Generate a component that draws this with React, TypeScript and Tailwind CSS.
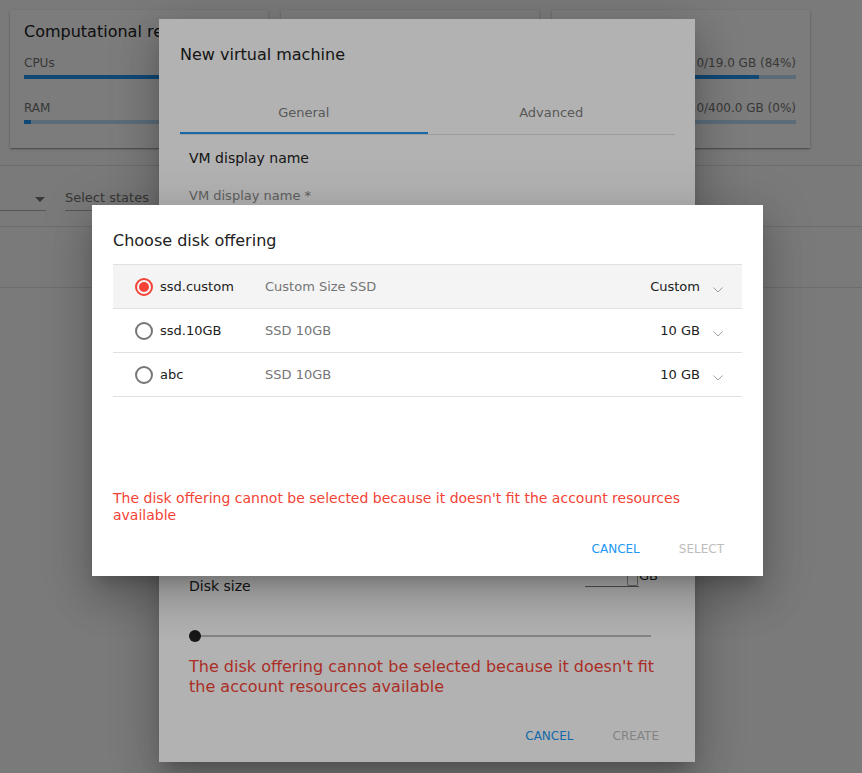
import React from "react";

const font = "font-['DejaVu_Sans',sans-serif]";

const dialogShadow =
  "shadow-[0_11px_15px_-7px_rgba(0,0,0,0.2),0_24px_38px_3px_rgba(0,0,0,0.14),0_9px_46px_8px_rgba(0,0,0,0.12)]";

type Usage = { label: string; value: string; percent: number };

const ResourceCard: React.FC<{ title: string; rows: Usage[] }> = ({ title, rows }) => (
  <div className="h-[138px] bg-white px-[14px] pt-[12px] shadow-[0_1px_3px_rgba(0,0,0,0.2),0_1px_1px_rgba(0,0,0,0.14),0_2px_1px_-1px_rgba(0,0,0,0.12)]">
    <div className="text-[16px] leading-[19px] text-[#212121] whitespace-nowrap">{title}</div>
    {rows.map((row, i) => (
      <div key={row.label} className={i === 0 ? "mt-[15px]" : "mt-[22px]"}>
        <div className="flex justify-between text-[12px] leading-[14px] text-[#757575] whitespace-nowrap">
          <span>{row.label}</span>
          <span>{row.value}</span>
        </div>
        <div className="mt-[5px] h-[4px] bg-[#bbdefb]">
          <div className="h-full bg-[#2196f3]" style={{ width: `${row.percent}%` }} />
        </div>
      </div>
    ))}
  </div>
);

const Chevron = () => (
  <svg width="10" height="6" viewBox="0 0 10 6" className="mt-[10px]">
    <polyline points="0.5,0.5 5,5 9.5,0.5" fill="none" stroke="#9e9e9e" strokeWidth="1" />
  </svg>
);

const Radio: React.FC<{ checked?: boolean }> = ({ checked }) =>
  checked ? (
    <div className="flex h-[18px] w-[18px] items-center justify-center rounded-full border-2 border-[#f44336]">
      <div className="h-[10px] w-[10px] rounded-full bg-[#f44336]" />
    </div>
  ) : (
    <div className="h-[18px] w-[18px] rounded-full border-2 border-[#757575]" />
  );

const offerings = [
  { name: "ssd.custom", description: "Custom Size SSD", size: "Custom", selected: true },
  { name: "ssd.10GB", description: "SSD 10GB", size: "10 GB", selected: false },
  { name: "abc", description: "SSD 10GB", size: "10 GB", selected: false },
];

export default function App() {
  return (
    <div className={`relative h-[773px] w-[862px] overflow-hidden bg-[#fbfbfb] ${font}`}>
      {/* page behind the dialogs */}
      <div className="px-[10px] pt-[10px]">
        <div className="grid w-[800px] grid-cols-3 gap-[13px]">
          <ResourceCard
            title="Computational resources"
            rows={[
              { label: "CPUs", value: "3/4 (75%)", percent: 75 },
              { label: "RAM", value: "1.5/8.0 GB (3%)", percent: 3 },
            ]}
          />
          <ResourceCard
            title="Instances"
            rows={[
              { label: "VMs", value: "3/20 (15%)", percent: 15 },
              { label: "IPs", value: "2/20 (10%)", percent: 10 },
            ]}
          />
          <ResourceCard
            title="Storage"
            rows={[
              { label: "Primary", value: "16.0/19.0 GB (84%)", percent: 84 },
              { label: "Secondary", value: "0.0/400.0 GB (0%)", percent: 0 },
            ]}
          />
        </div>
      </div>
      <div className="mt-[17px] border-t border-[#e0e0e0]">
        <div className="flex h-[60px] items-start gap-[19px] pt-[22px]">
          <div className="relative h-[23px] w-[46px] border-b border-[#b0b0b0]">
            <svg width="10" height="5" viewBox="0 0 10 5" className="absolute left-[35px] top-[9px]">
              <polygon points="0,0 10,0 5,5" fill="#757575" />
            </svg>
          </div>
          <div className="h-[23px] w-[200px] border-b border-[#b0b0b0] pt-[2px] text-[13px] leading-[16px] text-[#757575]">
            Select states
          </div>
        </div>
        <div className="h-[61px] border-t border-[#e0e0e0]" />
        <div className="border-t border-[#e0e0e0]" />
      </div>

      {/* first backdrop + New virtual machine dialog */}
      <div className="absolute inset-0 bg-black/30" />
      <div className="absolute inset-0 flex items-center justify-center pr-[8px] pt-[8px]">
        <div className={`flex h-[743px] w-[536px] flex-col bg-white ${dialogShadow}`}>
          <div className="pl-[21px] pt-[26px] text-[16px] leading-[20px] text-[#212121]">New virtual machine</div>
          <div className="ml-[21px] mr-[20px] mt-[23px] flex border-b border-[#e0e0e0] text-[13px] text-[#808080]">
            <div className="relative flex h-[46px] flex-1 items-center justify-center pt-[4px]">
              General
              <div className="absolute bottom-0 left-0 right-0 h-[2px] bg-[#2196f3]" />
            </div>
            <div className="flex h-[46px] flex-1 items-center justify-center pt-[4px]">Advanced</div>
          </div>
          <div className="pl-[30px]">
            <div className="mt-[15px] text-[14px] leading-[17px] text-[#212121]">VM display name</div>
            <div className="mt-[21px] text-[13px] leading-[16px] text-[#8a8a8a]">VM display name *</div>
          </div>
          <div className="flex-1" />
          <div className="pl-[30px] pr-[37px]">
            <div className="flex h-[29px] items-start justify-between">
              <div className="mt-[10px] text-[14px] leading-[17px] text-[#212121]">Disk size</div>
              <div className="flex items-start">
                <div className="relative mt-[1px] h-[18px] w-[54px] border-b border-[#757575]">
                  <div className="absolute right-[1px] top-[4px] h-[13px] w-[11px] rounded-[2px] border border-[#9e9e9e]" />
                </div>
                <div className="text-[13px] leading-[16px] text-[#212121]">GB</div>
              </div>
            </div>
            <div className="relative mt-[33px] flex h-[12px] w-[462px] items-center">
              <div className="h-[2px] w-full bg-[#bdbdbd]" />
              <div className="absolute left-0 top-0 h-[12px] w-[12px] rounded-full bg-[#212121]" />
            </div>
            <div className="mt-[15px] w-[476px] text-[16px] leading-[20px] text-[#f44336]">
              The disk offering cannot be selected because it doesn't fit the account resources available
            </div>
          </div>
          <div className="mt-[21px] flex h-[36px] justify-end gap-[7px] pr-[20px] text-[12px]">
            <button className="px-4 text-[#2196f3]">CANCEL</button>
            <button className="px-4 text-[#bdbdbd]">CREATE</button>
          </div>
          <div className="h-[8px]" />
        </div>
      </div>

      {/* second backdrop + Choose disk offering dialog */}
      <div className="absolute inset-0 bg-black/30" />
      <div className="absolute inset-0 flex items-center justify-center pr-[7px] pt-[8px]">
        <div className={`flex h-[371px] w-[671px] flex-col bg-white px-[21px] ${dialogShadow}`}>
          <div className="mt-[25px] text-[16px] leading-[22px] text-[#212121]">Choose disk offering</div>
          <div className="mt-[12px] border-t border-[#e0e0e0]">
            {offerings.map((o) => (
              <div
                key={o.name}
                className={`flex h-[44px] items-center border-b border-[#e0e0e0] pl-[22px] pr-[18px] text-[13px] ${
                  o.selected ? "bg-[#f4f4f4]" : ""
                }`}
              >
                <Radio checked={o.selected} />
                <span className="ml-[7px] w-[105px] text-[#212121]">{o.name}</span>
                <span className="flex-1 text-[#757575]">{o.description}</span>
                <span className="text-[#212121]">{o.size}</span>
                <div className="ml-[12px] flex h-[20px] w-[12px] items-start justify-center">
                  <Chevron />
                </div>
              </div>
            ))}
          </div>
          <div className="mt-[93px] text-[14px] leading-[17px] text-[#f44336]">
            The disk offering cannot be selected because it doesn't fit the account resources available
          </div>
          <div className="mr-[2px] mt-[7px] flex h-[36px] justify-end gap-[7px] text-[12px]">
            <button className="px-4 text-[#2196f3]">CANCEL</button>
            <button className="px-4 text-[#bdbdbd]">SELECT</button>
          </div>
        </div>
      </div>
    </div>
  );
}
